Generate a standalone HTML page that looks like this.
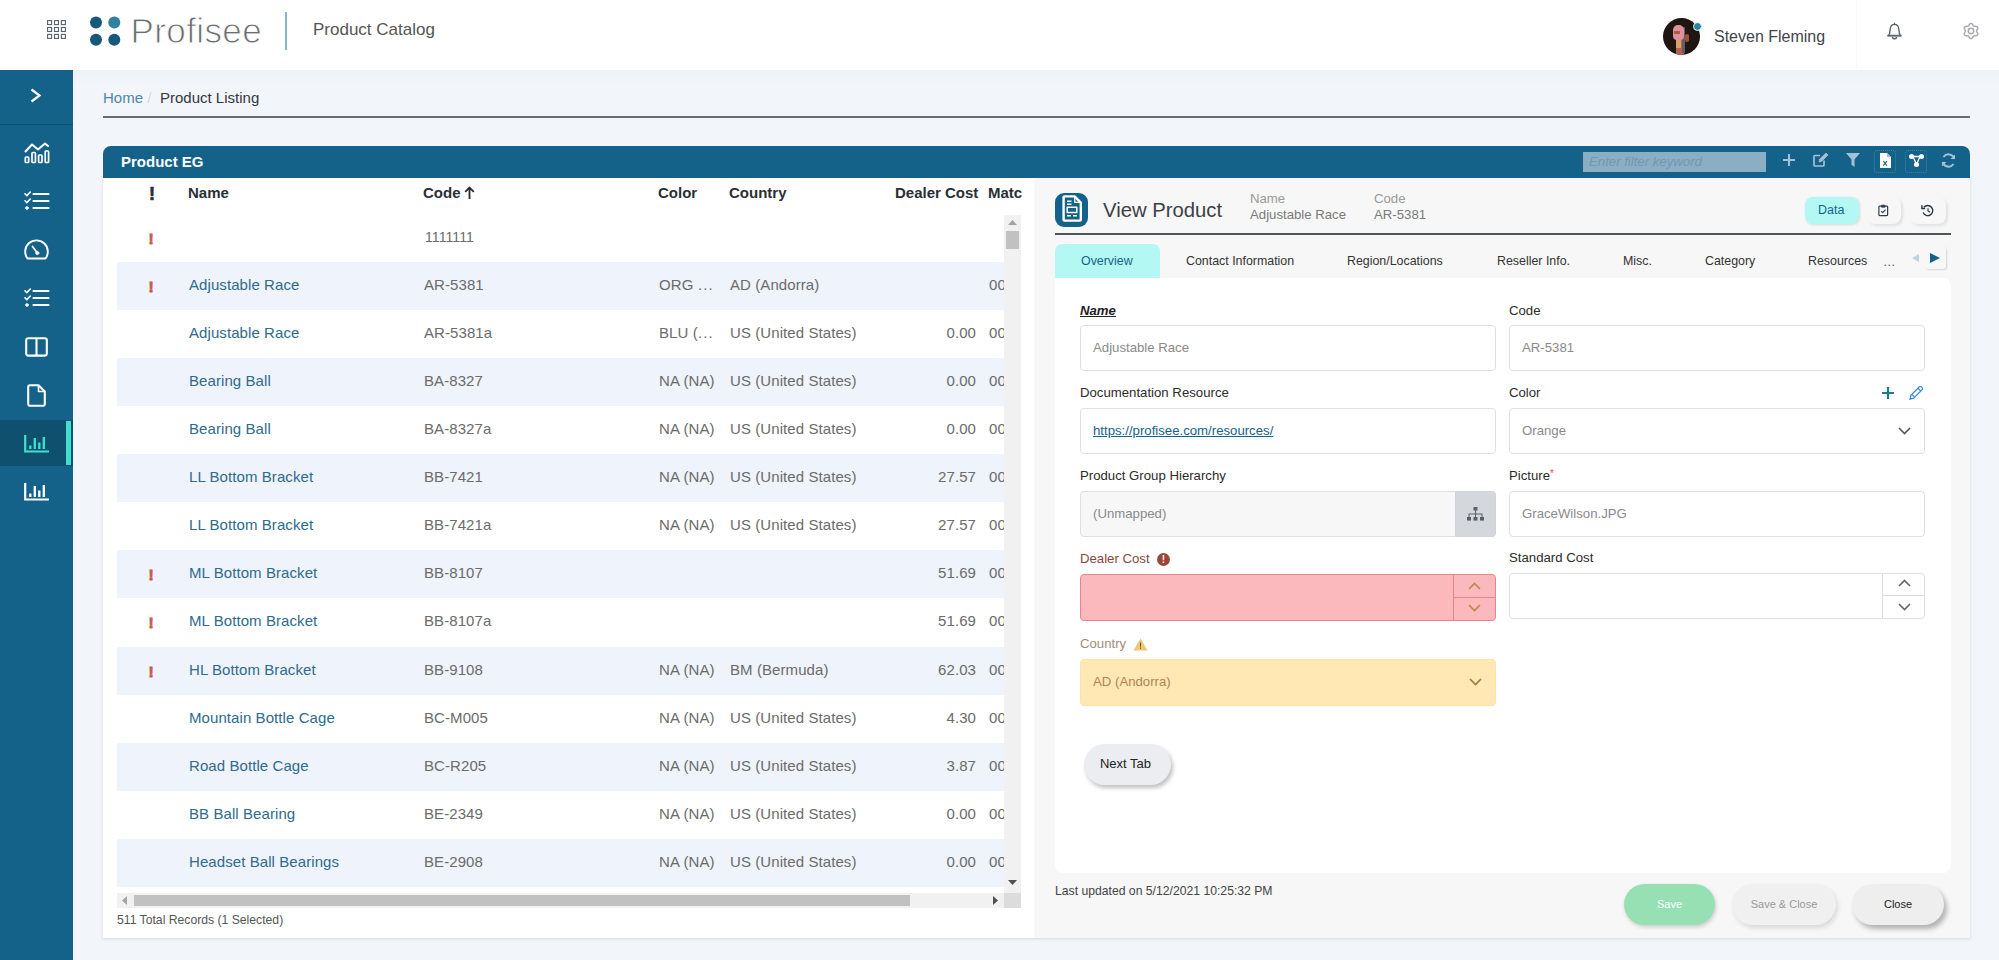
<!DOCTYPE html>
<html lang="en">
<head>
<meta charset="utf-8">
<title>Product Catalog</title>
<style>
*{box-sizing:border-box;margin:0;padding:0}
html,body{width:1999px;height:960px;overflow:hidden}
body{font-family:"Liberation Sans",sans-serif;background:#f2f6fb;color:#333;position:relative}
.abs{position:absolute}
.t{position:absolute;white-space:nowrap;line-height:1}
/* header */
#hdr{left:0;top:0;width:1999px;height:70px;background:#fff}
#side{left:0;top:70px;width:73px;height:890px;background:#14628a}
#topfade{left:73px;top:70px;width:1926px;height:14px;background:linear-gradient(#eef2f5,#f2f6fb)}
/* panel */
#panelhdr{left:103px;top:146px;width:1867px;height:32px;background:#14628a;border-radius:8px 8px 0 0}
#leftp{left:103px;top:178px;width:933px;height:760px;background:#fff;box-shadow:0 1px 3px rgba(0,0,0,.12)}
#rightp{left:1036px;top:178px;width:934px;height:760px;background:#f7f7f7;box-shadow:0 1px 3px rgba(0,0,0,.12)}
.stripe{position:absolute;left:117px;width:887px;height:48px;background:#eff3fc}
.gh{position:absolute;top:185px;font-weight:bold;font-size:15px;color:#2a2f36;line-height:16px;white-space:nowrap}
.gh.ex{font-size:18px;top:185.500px;-webkit-text-stroke:.7px #2a2f36}
.row{position:absolute;left:117px;width:887px;height:48px;font-size:15px;line-height:48px;color:#6b6b6b;white-space:nowrap}
.row span{position:absolute;top:-1px;letter-spacing:.08px}
.row .n{left:72px;color:#2e6b8c}
.row .c{left:307px}
.row .co{left:542px;width:54px;overflow:hidden}
.row .ct{left:613px}
.row .d{right:28px;text-align:right}
.row .m{left:872px;width:15px;overflow:hidden}
.row .e{left:31.500px;top:1px;color:#cc584c;font-weight:bold;font-size:15.500px;-webkit-text-stroke:.8px #cc584c}
/* form */
.lbl{position:absolute;font-size:13.2px;color:#2b2b2b;line-height:14px;white-space:nowrap}
.fld{position:absolute;height:46px;width:416px;border:1px solid #dfdfdf;border-radius:4px;background:#fff;font-size:13.2px;color:#8a8a8a;line-height:44px;padding-left:12px;white-space:nowrap}
.tab{position:absolute;top:254px;font-size:12.4px;color:#333;line-height:14px;white-space:nowrap}
.pill{position:absolute;height:41px;border-radius:21px;font-size:11px;text-align:center;line-height:41px}
</style>
</head>
<body>
<div id="hdr" class="abs"></div>
<div id="side" class="abs"></div>
<div id="topfade" class="abs"></div>

<!-- HEADER CONTENT -->
<svg class="abs" style="left:47px;top:20px" width="19" height="19" viewBox="0 0 19 19" fill="none" stroke="#556070" stroke-width="1.1">
<rect x=".6" y=".6" width="4" height="4"/><rect x="7.5" y=".6" width="4" height="4"/><rect x="14.4" y=".6" width="4" height="4"/>
<rect x=".6" y="7.5" width="4" height="4"/><rect x="7.5" y="7.5" width="4" height="4"/><rect x="14.4" y="7.5" width="4" height="4"/>
<rect x=".6" y="14.4" width="4" height="4"/><rect x="7.5" y="14.4" width="4" height="4"/><rect x="14.4" y="14.4" width="4" height="4"/>
</svg>
<svg class="abs" style="left:88px;top:14px" width="36" height="36" viewBox="0 0 36 36">
<circle cx="8" cy="8.5" r="6" fill="#17577a"/><circle cx="26.3" cy="8.5" r="6" fill="#2f829d"/>
<circle cx="8" cy="25.8" r="6" fill="#17577a"/><circle cx="26.3" cy="25.8" r="6" fill="#17577a"/>
</svg>
<div class="t" id="logo" style="left:130.500px;top:11px;font-size:35px;color:#6a6e73;line-height:40px;letter-spacing:.4px;-webkit-text-stroke:.9px #fff">Profisee</div>
<div class="abs" style="left:285px;top:12px;width:2px;height:38px;background:#8ab4c9"></div>
<div class="t" id="pc" style="left:313px;top:21px;font-size:17px;color:#555;line-height:18px">Product Catalog</div>

<div class="abs" id="avatar" style="left:1663px;top:17.500px;width:37px;height:37px;border-radius:50%;background:#1f1513;overflow:hidden">
  <div class="abs" style="left:12.500px;top:21px;width:8px;height:17px;background:#b4614f"></div>
  <div class="abs" style="left:21.500px;top:16px;width:4.500px;height:8px;border-radius:2px;background:#a84c3f"></div>
  <div class="abs" style="left:19px;top:9px;width:3px;height:26px;background:#5f5f66"></div>
  <div class="abs" style="left:10px;top:7.500px;width:10.500px;height:15px;border-radius:5px 5px 4px 4px;background:#e28f98"></div>
  <div class="abs" style="left:11px;top:13px;width:6px;height:3px;background:#a85a4c"></div>
  <div class="abs" style="left:13px;top:22px;width:5px;height:8px;background:#d8a06a"></div>
</div>
<div class="abs" style="left:1692.500px;top:21.500px;width:9.500px;height:9.500px;border-radius:50%;background:#2585a3;border:1.5px solid #f2fbfb"></div>
<div class="t" id="user" style="left:1714px;top:28px;font-size:16px;color:#3f454b;line-height:18px">Steven Fleming</div>
<div class="abs" style="left:1856px;top:0;width:1px;height:70px;background:#f9f9f9"></div>
<svg class="abs" style="left:1886px;top:22px" width="17" height="18" viewBox="0 0 17 18" fill="none" stroke="#5d636a" stroke-width="1.400" stroke-linejoin="round" stroke-linecap="round"><path d="M8.500 1.300v1.200M8.500 2.400c-2.500 0-4 1.800-4.300 4.600L3.600 11.500 2.500 13.600h12L13.400 11.500 12.800 7c-.3-2.800-1.800-4.600-4.300-4.600z"/><path d="M2 13.700h13" stroke-width="1.700"/><path d="M6.500 15.600c.5.900 1.200 1.200 2 1.200s1.500-.3 2-1.200" stroke-width="1.600"/></svg>
<svg class="abs" style="left:1961.800px;top:22px" width="18" height="18" viewBox="0 0 18 18" fill="none" stroke="#a6aaaf" stroke-width="1.500" stroke-linejoin="round"><path d="M14.60 9.00 L14.64 8.70 L14.76 8.39 L14.94 8.06 L15.15 7.69 L15.38 7.29 L15.57 6.86 L15.71 6.42 L15.77 5.99 L15.73 5.57 L15.58 5.20 L15.33 4.89 L14.99 4.65 L14.59 4.48 L14.13 4.38 L13.67 4.33 L13.21 4.32 L12.78 4.33 L12.40 4.31 L12.08 4.26 L11.80 4.15 L11.56 3.97 L11.36 3.71 L11.15 3.39 L10.94 3.02 L10.71 2.62 L10.44 2.24 L10.12 1.90 L9.77 1.63 L9.40 1.46 L9.00 1.40 L8.60 1.46 L8.23 1.63 L7.88 1.90 L7.56 2.24 L7.29 2.62 L7.06 3.02 L6.85 3.39 L6.64 3.71 L6.44 3.97 L6.20 4.15 L5.92 4.26 L5.60 4.31 L5.22 4.33 L4.79 4.32 L4.33 4.33 L3.87 4.38 L3.41 4.48 L3.01 4.65 L2.67 4.89 L2.42 5.20 L2.27 5.57 L2.23 5.99 L2.29 6.42 L2.43 6.86 L2.62 7.29 L2.85 7.69 L3.06 8.06 L3.24 8.39 L3.36 8.70 L3.40 9.00 L3.36 9.30 L3.24 9.61 L3.06 9.94 L2.85 10.31 L2.62 10.71 L2.43 11.14 L2.29 11.58 L2.23 12.01 L2.27 12.43 L2.42 12.80 L2.67 13.11 L3.01 13.35 L3.41 13.52 L3.87 13.62 L4.33 13.67 L4.79 13.68 L5.22 13.67 L5.60 13.69 L5.92 13.74 L6.20 13.85 L6.44 14.03 L6.64 14.29 L6.85 14.61 L7.06 14.98 L7.29 15.38 L7.56 15.76 L7.88 16.10 L8.23 16.37 L8.60 16.54 L9.00 16.60 L9.40 16.54 L9.77 16.37 L10.12 16.10 L10.44 15.76 L10.71 15.38 L10.94 14.98 L11.15 14.61 L11.36 14.29 L11.56 14.03 L11.80 13.85 L12.08 13.74 L12.40 13.69 L12.78 13.67 L13.21 13.68 L13.67 13.67 L14.13 13.62 L14.59 13.52 L14.99 13.35 L15.33 13.11 L15.58 12.80 L15.73 12.43 L15.77 12.01 L15.71 11.58 L15.57 11.14 L15.38 10.71 L15.15 10.31 L14.94 9.94 L14.76 9.61 L14.64 9.30z"/><circle cx="9" cy="9" r="2.700"/></svg>

<!-- SIDEBAR -->
<div class="abs" style="left:0;top:124px;width:73px;height:1px;background:#0f4f70"></div>
<svg class="abs" style="left:30px;top:88px" width="12" height="15" viewBox="0 0 12 15" fill="none" stroke="#fff" stroke-width="2.2"><path d="M1.500 1.500l8 6-8 6"/></svg>
<div class="abs" style="left:0;top:420px;width:73px;height:46px;background:#10506f"></div>
<div class="abs" style="left:66px;top:421px;width:5px;height:44px;background:#3fe0d0"></div>
<!-- SIDEICONS -->
<svg class="abs" style="left:24px;top:142px" width="26" height="22" viewBox="0 0 26 22" fill="none" stroke="#fff" stroke-width="1.700" stroke-linejoin="round" stroke-linecap="round"><path d="M1.500 9.500L8 2.500l6 5 7-6 3 2.500" stroke-width="2"/><rect x="1.300" y="15" width="3.400" height="5.500" rx=".8"/><rect x="8" y="10.500" width="3.400" height="10" rx=".8"/><rect x="14.600" y="13" width="3.400" height="7.500" rx=".8"/><rect x="21.200" y="9" width="3.400" height="11.500" rx=".8"/></svg>
<svg class="abs" style="left:24px;top:191px" width="26" height="20" viewBox="0 0 26 20" fill="none" stroke="#fff" stroke-width="1.900" stroke-linecap="round" stroke-linejoin="round"><path d="M9.500 3h15M9.500 10h15M9.500 17h15" stroke-width="2.200"/><path d="M1 2.800l1.800 1.800L6.300 1M1 9.800l1.800 1.800L6.300 8" stroke-width="1.600"/><circle cx="3" cy="17" r="1.300" fill="#fff" stroke-width="1"/></svg>
<svg class="abs" style="left:24px;top:239px" width="25" height="21" viewBox="0 0 25 21" fill="none" stroke="#fff" stroke-width="1.900" stroke-linecap="round" stroke-linejoin="round"><path d="M3.500 19.500A11.300 11.300 0 1 1 21.500 19.500z"/><path d="M8.500 7.500l4.500 6" stroke-width="1.800"/><circle cx="13.300" cy="14" r="1.600" fill="#fff" stroke-width=".8"/></svg>
<svg class="abs" style="left:24px;top:288px" width="26" height="20" viewBox="0 0 26 20" fill="none" stroke="#fff" stroke-width="1.900" stroke-linecap="round" stroke-linejoin="round"><path d="M9.500 3h15M9.500 10h15M9.500 17h15" stroke-width="2.200"/><path d="M1 2.800l1.800 1.800L6.300 1M1 9.800l1.800 1.800L6.300 8" stroke-width="1.600"/><circle cx="3" cy="17" r="1.300" fill="#fff" stroke-width="1"/></svg>
<svg class="abs" style="left:25px;top:337px" width="23" height="20" viewBox="0 0 23 20" fill="none" stroke="#fff" stroke-width="2.100"><rect x="1.200" y="1.200" width="20.600" height="17.400" rx="2"/><path d="M11.500 1.200v17.400"/></svg>
<svg class="abs" style="left:27px;top:384px" width="19" height="23" viewBox="0 0 19 23" fill="none" stroke="#fff" stroke-width="2.100" stroke-linejoin="round"><path d="M3 1.200h8.500l6.300 6.300V20a1.800 1.800 0 0 1-1.800 1.800H3A1.800 1.800 0 0 1 1.200 20V3A1.800 1.800 0 0 1 3 1.200z"/><path d="M11.500 1.200v6.300h6.300" stroke-width="1.600"/></svg>
<svg class="abs" style="left:24px;top:435px" width="25" height="18" viewBox="0 0 25 18" fill="none" stroke="#3fe0d0" stroke-width="2" stroke-linecap="butt"><path d="M1.200 0v16.500H25" stroke-width="2.200"/><path d="M6.300 10.500v3.500M10.800 3v11M15.300 7.500v6.500M19.800 2v12" stroke-width="2.300"/></svg>
<svg class="abs" style="left:24px;top:483px" width="25" height="18" viewBox="0 0 25 18" fill="none" stroke="#fff" stroke-width="2" stroke-linecap="butt"><path d="M1.200 0v16.500H25" stroke-width="2.200"/><path d="M6.300 10.500v3.500M10.800 3v11M15.300 7.500v6.500M19.800 2v12" stroke-width="2.300"/></svg>
<!-- /SIDEICONS -->

<!-- BREADCRUMB -->
<div class="t" id="bc1" style="left:103px;top:90px;font-size:15px;color:#4e86a6;line-height:16px">Home</div>
<div class="t" style="left:147.500px;top:90px;font-size:14px;color:#d3d7db;line-height:16px">/</div>
<div class="t" id="bc2" style="left:160px;top:90px;font-size:15px;color:#33373b;line-height:16px">Product Listing</div>
<div class="abs" style="left:103px;top:116px;width:1867px;height:2px;background:#686d72"></div>

<!-- PANEL -->
<div id="leftp" class="abs"></div>
<div id="rightp" class="abs"></div>
<div id="panelhdr" class="abs"></div>
<div class="t" id="peg" style="left:121px;top:154px;font-size:15px;font-weight:bold;color:#fff;line-height:16px">Product EG</div>
<div class="abs" style="left:1583px;top:152px;width:183px;height:20px;background:#8aaec3"></div>
<div class="t" style="left:1589px;top:155px;font-size:13.2px;font-style:italic;color:#7299b3;line-height:14px">Enter filter keyword</div>
<!-- HDRICONS -->
<svg class="abs" style="left:1783px;top:154px" width="12" height="12" viewBox="0 0 12 12" stroke="#a2c2d3" stroke-width="2"><path d="M6 0v12M0 6h12"/></svg>
<svg class="abs" style="left:1813px;top:152px" width="16" height="15" viewBox="0 0 16 15" fill="none" stroke="#a2c2d3" stroke-width="1.700"><path d="M11 8.500V13a1 1 0 0 1-1 1H2a1 1 0 0 1-1-1V4.500a1 1 0 0 1 1-1h5"/><path d="M6 10l.6-2.800L13 1l2 2-6.300 6.300z" fill="#a2c2d3" stroke-width=".8"/></svg>
<svg class="abs" style="left:1846px;top:153px" width="14" height="14" viewBox="0 0 14 14"><path d="M0 0h14L8.500 6.500V14l-3-2.200V6.500z" fill="#a2c2d3"/></svg>
<div class="abs" style="left:1874px;top:150px;width:22px;height:23px;border:1px dotted #3d85a6;border-radius:3px"></div>
<svg class="abs" style="left:1880px;top:153px" width="11" height="15" viewBox="0 0 11 15"><path d="M0 0h7l4 4v11H0z" fill="#fff"/><path d="M7 0v4h4" fill="#9bbdd0"/><path d="M3.300 8l3.600 4.600M6.900 8L3.300 12.600" stroke="#14628a" stroke-width="1.200"/></svg>
<div class="abs" style="left:1905px;top:150px;width:22px;height:23px;border:1px dotted #3d85a6;border-radius:3px"></div>
<svg class="abs" style="left:1909px;top:154px" width="15" height="13" viewBox="0 0 15 13" fill="#fff" stroke="#fff"><path d="M2.500 2.500h10M4 2.500l3.500 8M11 2.500l-3.500 8" stroke-width="1.300" fill="none"/><circle cx="2.500" cy="2.500" r="2.500" stroke="none"/><circle cx="12.500" cy="2.500" r="2.500" stroke="none"/><circle cx="7.500" cy="10.500" r="2.500" stroke="none"/></svg>
<svg class="abs" style="left:1941px;top:153px" width="15" height="15" viewBox="0 0 15 15" fill="none" stroke="#a2c2d3" stroke-width="2"><path d="M13.300 6A6 6 0 0 0 2.500 4"/><path d="M1.700 9A6 6 0 0 0 12.500 11"/><path d="M9.500 6h4.500V1.500z" fill="#a2c2d3" stroke="none"/><path d="M5.500 9H1v4.500z" fill="#a2c2d3" stroke="none"/></svg>
<!-- /HDRICONS -->

<!-- GRID -->
<!-- GRIDBODY -->
<div class="gh ex" style="left:149px">!</div>
<div class="gh" style="left:188px">Name</div>
<div class="gh" style="left:423px">Code</div>
<svg class="abs" style="left:464px;top:186px" width="11" height="14" viewBox="0 0 11 14" fill="none" stroke="#2a2f36" stroke-width="1.9"><path d="M5.500 13V1.500M1.200 5.800l4.300-4.300 4.300 4.300"/></svg>
<div class="gh" style="left:658px">Color</div>
<div class="gh" style="left:729px">Country</div>
<div class="gh" style="left:895px">Dealer Cost</div>
<div class="gh" style="left:988px;width:34px;overflow:hidden">Matc</div>
<div class="row" style="top:214.00px"><span class="e">!</span><span class="c" style="font-size:14px;left:308px">1111111</span></div>
<div class="row" style="top:262.06px;background:#eff3fc"><span class="e">!</span><span class="n">Adjustable Race</span><span class="c">AR-5381</span><span class="co">ORG</span><span style="left:581px;letter-spacing:1.1px">...</span><span class="ct">AD (Andorra)</span><span class="m">00</span></div>
<div class="row" style="top:310.12px"><span class="n">Adjustable Race</span><span class="c">AR-5381a</span><span class="co">BLU (</span><span style="left:581px;letter-spacing:1.1px">...</span><span class="ct">US (United States)</span><span class="d">0.00</span><span class="m">00</span></div>
<div class="row" style="top:358.18px;background:#eff3fc"><span class="n">Bearing Ball</span><span class="c">BA-8327</span><span class="co" style="width:70px">NA (NA)</span><span class="ct">US (United States)</span><span class="d">0.00</span><span class="m">00</span></div>
<div class="row" style="top:406.24px"><span class="n">Bearing Ball</span><span class="c">BA-8327a</span><span class="co" style="width:70px">NA (NA)</span><span class="ct">US (United States)</span><span class="d">0.00</span><span class="m">00</span></div>
<div class="row" style="top:454.30px;background:#eff3fc"><span class="n">LL Bottom Bracket</span><span class="c">BB-7421</span><span class="co" style="width:70px">NA (NA)</span><span class="ct">US (United States)</span><span class="d">27.57</span><span class="m">00</span></div>
<div class="row" style="top:502.36px"><span class="n">LL Bottom Bracket</span><span class="c">BB-7421a</span><span class="co" style="width:70px">NA (NA)</span><span class="ct">US (United States)</span><span class="d">27.57</span><span class="m">00</span></div>
<div class="row" style="top:550.42px;background:#eff3fc"><span class="e">!</span><span class="n">ML Bottom Bracket</span><span class="c">BB-8107</span><span class="d">51.69</span><span class="m">00</span></div>
<div class="row" style="top:598.48px"><span class="e">!</span><span class="n">ML Bottom Bracket</span><span class="c">BB-8107a</span><span class="d">51.69</span><span class="m">00</span></div>
<div class="row" style="top:646.54px;background:#eff3fc"><span class="e">!</span><span class="n">HL Bottom Bracket</span><span class="c">BB-9108</span><span class="co" style="width:70px">NA (NA)</span><span class="ct">BM (Bermuda)</span><span class="d">62.03</span><span class="m">00</span></div>
<div class="row" style="top:694.60px"><span class="n">Mountain Bottle Cage</span><span class="c">BC-M005</span><span class="co" style="width:70px">NA (NA)</span><span class="ct">US (United States)</span><span class="d">4.30</span><span class="m">00</span></div>
<div class="row" style="top:742.66px;background:#eff3fc"><span class="n">Road Bottle Cage</span><span class="c">BC-R205</span><span class="co" style="width:70px">NA (NA)</span><span class="ct">US (United States)</span><span class="d">3.87</span><span class="m">00</span></div>
<div class="row" style="top:790.72px"><span class="n">BB Ball Bearing</span><span class="c">BE-2349</span><span class="co" style="width:70px">NA (NA)</span><span class="ct">US (United States)</span><span class="d">0.00</span><span class="m">00</span></div>
<div class="row" style="top:838.78px;background:#eff3fc"><span class="n">Headset Ball Bearings</span><span class="c">BE-2908</span><span class="co" style="width:70px">NA (NA)</span><span class="ct">US (United States)</span><span class="d">0.00</span><span class="m">00</span></div>
<div class="abs" style="left:1004px;top:215px;width:17px;height:678px;background:#f1f1f1"></div>
<div class="abs" style="left:1006px;top:231px;width:13px;height:18px;background:#c1c1c1"></div>
<svg class="abs" style="left:1008px;top:220px" width="9" height="5" viewBox="0 0 9 5"><path d="M0 5L4.500 0 9 5z" fill="#a3a3a3"/></svg>
<svg class="abs" style="left:1008px;top:880px" width="9" height="5" viewBox="0 0 9 5"><path d="M0 0L4.500 5 9 0z" fill="#505050"/></svg>
<div class="abs" style="left:117px;top:893px;width:887px;height:15px;background:#f1f1f1"></div>
<div class="abs" style="left:1004px;top:893px;width:17px;height:15px;background:#dcdcdc"></div>
<div class="abs" style="left:134px;top:895px;width:776px;height:11px;background:#c1c1c1"></div>
<svg class="abs" style="left:122px;top:896px" width="5" height="9" viewBox="0 0 5 9"><path d="M5 0L0 4.500 5 9z" fill="#a3a3a3"/></svg>
<svg class="abs" style="left:993px;top:896px" width="5" height="9" viewBox="0 0 5 9"><path d="M0 0L5 4.500 0 9z" fill="#505050"/></svg>
<div class="t" id="tot" style="left:117px;top:913px;font-size:12.2px;color:#555;line-height:14px">511 Total Records (1 Selected)</div>
<!-- /GRIDBODY -->

<!-- FORM -->
<!-- FORMBODY -->
<div class="abs" style="left:1055px;top:192.500px;width:33px;height:34px;border-radius:9px;background:#14628a"></div>
<svg class="abs" style="left:1062px;top:195px" width="20" height="27" viewBox="0 0 20 27" fill="none" stroke="#fff" stroke-width="2.400" stroke-linejoin="round"><path d="M2.400 1.400h10.200l6.200 6.200v17.200a.8.800 0 0 1-.8.800H2.400a.8.800 0 0 1-.8-.8V2.200a.8.800 0 0 1 .8-.8z"/><path d="M12.800 2v5.400h5.400" stroke-width="1.300"/><path d="M5 6.200h4.500M5 9.200h4.500" stroke-width="1.500"/><rect x="5.200" y="12.200" width="9.600" height="5.200" stroke-width="1.500"/><path d="M5 20.800h4M11 20.800h4" stroke-width="1.500"/></svg>
<div class="t" id="vp" style="left:1103px;top:199px;font-size:20.3px;color:#3c4147;line-height:22px">View Product</div>
<div class="t" style="left:1250px;top:191.700px;font-size:13.2px;color:#9a9a9a;line-height:14px">Name</div>
<div class="t" style="left:1250px;top:207.700px;font-size:13.2px;color:#7a7a7a;line-height:14px">Adjustable Race</div>
<div class="t" style="left:1374px;top:191.700px;font-size:13.2px;color:#9a9a9a;line-height:14px">Code</div>
<div class="t" style="left:1374px;top:207.700px;font-size:13.2px;color:#7a7a7a;line-height:14px">AR-5381</div>
<div class="abs" style="left:1805px;top:197px;width:54px;height:27px;border-radius:8px;background:#b4f8f3;box-shadow:1px 1px 3px rgba(0,0,0,.12)"></div>
<div class="t" style="left:1818px;top:203px;font-size:12.5px;color:#14628a;line-height:14px">Data</div>
<div class="abs" style="left:1867px;top:197px;width:34px;height:27px;border-radius:8px;background:#f7f7f7;box-shadow:2px 2px 3px rgba(0,0,0,.09)"></div>
<div class="abs" style="left:1910px;top:197px;width:36px;height:27px;border-radius:8px;background:#f7f7f7;box-shadow:2px 2px 3px rgba(0,0,0,.09)"></div>
<svg class="abs" style="left:1878px;top:204px" width="10.500" height="12.800" viewBox="0 0 12 14" fill="none" stroke="#30404e" stroke-width="1.400"><rect x="1" y="2.200" width="10" height="10.800" rx="1"/><path d="M4 1h4v2.400H4z" fill="#30404e" stroke-width=".8"/><path d="M3.600 7.800l1.800 1.800 3.200-3.400" stroke-width="1.300"/></svg>
<svg class="abs" style="left:1921px;top:203.500px" width="13.500" height="13.500" viewBox="0 0 15 15" fill="none" stroke="#2c3640" stroke-width="1.500"><path d="M3.200 3.600A5.600 5.600 0 1 1 2.300 9.500"/><path d="M1 1.500v3.600h3.600" stroke-width="1.600"/><path d="M7.800 4.600v3.200l2 1.300" stroke-width="1.300"/></svg>
<div class="abs" style="left:1055px;top:233px;width:896px;height:2px;background:#50555a"></div>
<div class="abs" style="left:1055px;top:244px;width:105px;height:34px;border-radius:7px 7px 0 0;background:#b4f8f3"></div>
<div class="tab" style="left:1081px;color:#14628a">Overview</div>
<div class="tab" style="left:1186px">Contact Information</div>
<div class="tab" style="left:1347px">Region/Locations</div>
<div class="tab" style="left:1497px">Reseller Info.</div>
<div class="tab" style="left:1623px">Misc.</div>
<div class="tab" style="left:1705px">Category</div>
<div class="tab" style="left:1808px">Resources</div>
<div class="tab" style="left:1883.500px;top:255px;letter-spacing:.6px;color:#555">...</div>
<svg class="abs" style="left:1912px;top:254px" width="7" height="8" viewBox="0 0 9 10"><path d="M9 0L0 5l9 5z" fill="#bdd3e0"/></svg>
<div class="abs" style="left:1925px;top:247px;width:21px;height:22px;border-radius:3px;background:#f7f7f7;box-shadow:1px 1px 2px rgba(0,0,0,.14)"></div>
<svg class="abs" style="left:1930px;top:253px" width="10" height="10" viewBox="0 0 10 10"><path d="M0 0l10 5-10 5z" fill="#14628a"/></svg>
<div class="abs" style="left:1055px;top:278px;width:896px;height:595px;background:#fff;border-radius:0 8px 8px 8px"></div>
<div class="lbl" style="left:1080px;top:304px;font-weight:bold;font-style:italic;text-decoration:underline;color:#222">Name</div>
<div class="lbl" style="left:1509px;top:304px">Code</div>
<div class="fld" style="left:1080px;top:325px">Adjustable Race</div>
<div class="fld" style="left:1509px;top:325px">AR-5381</div>
<div class="lbl" style="left:1080px;top:386px">Documentation Resource</div>
<div class="lbl" style="left:1509px;top:386px">Color</div>
<svg class="abs" style="left:1882px;top:387px" width="12" height="12" viewBox="0 0 12 12" stroke="#1a7d8c" stroke-width="2.200"><path d="M6 0v12M0 6h12"/></svg>
<svg class="abs" style="left:1909px;top:386px" width="14" height="14" viewBox="0 0 14 14" fill="none" stroke="#3d8fd6" stroke-width="1.300"><path d="M1 13l.9-3.700L10.400.8a1.200 1.200 0 0 1 1.700 0l1.100 1.100a1.200 1.200 0 0 1 0 1.700L4.700 12.100z"/><path d="M9 2.200l2.800 2.800M3 8.500l2.600 2.600"/></svg>
<div class="fld" style="left:1080px;top:408px"><span style="color:#14628a;text-decoration:underline">https://profisee.com/resources/</span></div>
<div class="fld" style="left:1509px;top:408px">Orange</div>
<svg class="abs" style="left:1898px;top:427px" width="13" height="8" viewBox="0 0 13 8" fill="none" stroke="#555" stroke-width="1.600"><path d="M1 1l5.500 5.500L12 1"/></svg>
<div class="lbl" style="left:1080px;top:469px">Product Group Hierarchy</div>
<div class="lbl" style="left:1509px;top:469px">Picture<span style="color:#d9534f;font-size:10px;position:relative;top:-3px">*</span></div>
<div class="fld" style="left:1080px;top:491px;background:#f7f7f7">(Unmapped)</div>
<div class="abs" style="left:1455px;top:491px;width:41px;height:46px;background:#d4d8dc;border-radius:0 4px 4px 0;border:1px solid #d0d3d7"></div>
<svg class="abs" style="left:1467px;top:507px" width="17" height="14" viewBox="0 0 17 14" fill="#5a6068"><rect x="6.500" y="0" width="4" height="3.600"/><rect x="0" y="10" width="4" height="3.600"/><rect x="6.500" y="10" width="4" height="3.600"/><rect x="13" y="10" width="4" height="3.600"/><path d="M8 3.600h1v6.400H8zM1.500 6.500h14v1h-14zM1.500 6.500h1V10h-1zM14.500 6.500h1V10h-1z"/></svg>
<div class="fld" style="left:1509px;top:491px">GraceWilson.JPG</div>
<div class="lbl" style="left:1080px;top:552px;color:#86463c">Dealer Cost</div>
<div class="abs" style="left:1157px;top:553px;width:13px;height:13px;border-radius:50%;background:#9c463b;color:#fff;font-size:10px;font-weight:bold;text-align:center;line-height:13px">!</div>
<div class="lbl" style="left:1509px;top:551px">Standard Cost</div>
<div class="fld" style="left:1080px;top:574px;height:47px;background:#fbb9bd;border-color:#e8848b"></div>
<div class="abs" style="left:1453px;top:575px;width:1px;height:45px;background:#e8848b"></div>
<div class="abs" style="left:1453px;top:597px;width:42px;height:1px;background:#e8848b"></div>
<svg class="abs" style="left:1468px;top:582px" width="13" height="8" viewBox="0 0 13 8" fill="none" stroke="#b78a45" stroke-width="1.600"><path d="M1 7l5.500-5.500L12 7"/></svg>
<svg class="abs" style="left:1468px;top:604px" width="13" height="8" viewBox="0 0 13 8" fill="none" stroke="#b78a45" stroke-width="1.600"><path d="M1 1l5.500 5.500L12 1"/></svg>
<div class="fld" style="left:1509px;top:573px"></div>
<div class="abs" style="left:1882px;top:574px;width:1px;height:44px;background:#dcdcdc"></div>
<div class="abs" style="left:1882px;top:595px;width:42px;height:1px;background:#dcdcdc"></div>
<svg class="abs" style="left:1898px;top:579px" width="13" height="8" viewBox="0 0 13 8" fill="none" stroke="#666" stroke-width="1.600"><path d="M1 7l5.500-5.500L12 7"/></svg>
<svg class="abs" style="left:1898px;top:603px" width="13" height="8" viewBox="0 0 13 8" fill="none" stroke="#666" stroke-width="1.600"><path d="M1 1l5.500 5.500L12 1"/></svg>
<div class="lbl" style="left:1080px;top:637px;color:#a98a74">Country</div>
<svg class="abs" style="left:1133px;top:638px" width="15" height="13" viewBox="0 0 15 13"><path d="M7.500 0.500L14.500 12.500H0.500z" fill="#ecc870"/><path d="M7 4.500h1v4H7zM7 9.500h1v1.300H7z" fill="#6b4a1e"/></svg>
<div class="fld" style="left:1080px;top:659px;height:47px;background:#ffe8b4;border-color:#fde3a8;color:#b08257">AD (Andorra)</div>
<svg class="abs" style="left:1469px;top:678px" width="13" height="8" viewBox="0 0 13 8" fill="none" stroke="#a57a3c" stroke-width="1.700"><path d="M1 1l5.500 5.500L12 1"/></svg>
<div class="pill" style="left:1084px;top:744px;width:87px;background:#ebedf0;box-shadow:2px 3px 4px rgba(0,0,0,.25);font-size:13px;color:#222;line-height:39px;padding-right:4px">Next Tab</div>
<div class="t" id="lu" style="left:1055px;top:884px;font-size:12.2px;color:#444;line-height:14px">Last updated on 5/12/2021 10:25:32 PM</div>
<div class="pill" style="left:1624px;top:884px;width:91px;background:#96e0b3;color:#fff;box-shadow:1px 2px 4px rgba(0,0,0,.18)">Save</div>
<div class="pill" style="left:1732px;top:884px;width:104px;background:#f0f0f0;color:#9a9a9a;box-shadow:2px 3px 5px rgba(0,0,0,.12)">Save &amp; Close</div>
<div class="pill" style="left:1852px;top:884px;width:92px;background:#eeeeef;color:#222;box-shadow:3px 4px 5px rgba(0,0,0,.28)">Close</div>
<!-- /FORMBODY -->
</body>
</html>
